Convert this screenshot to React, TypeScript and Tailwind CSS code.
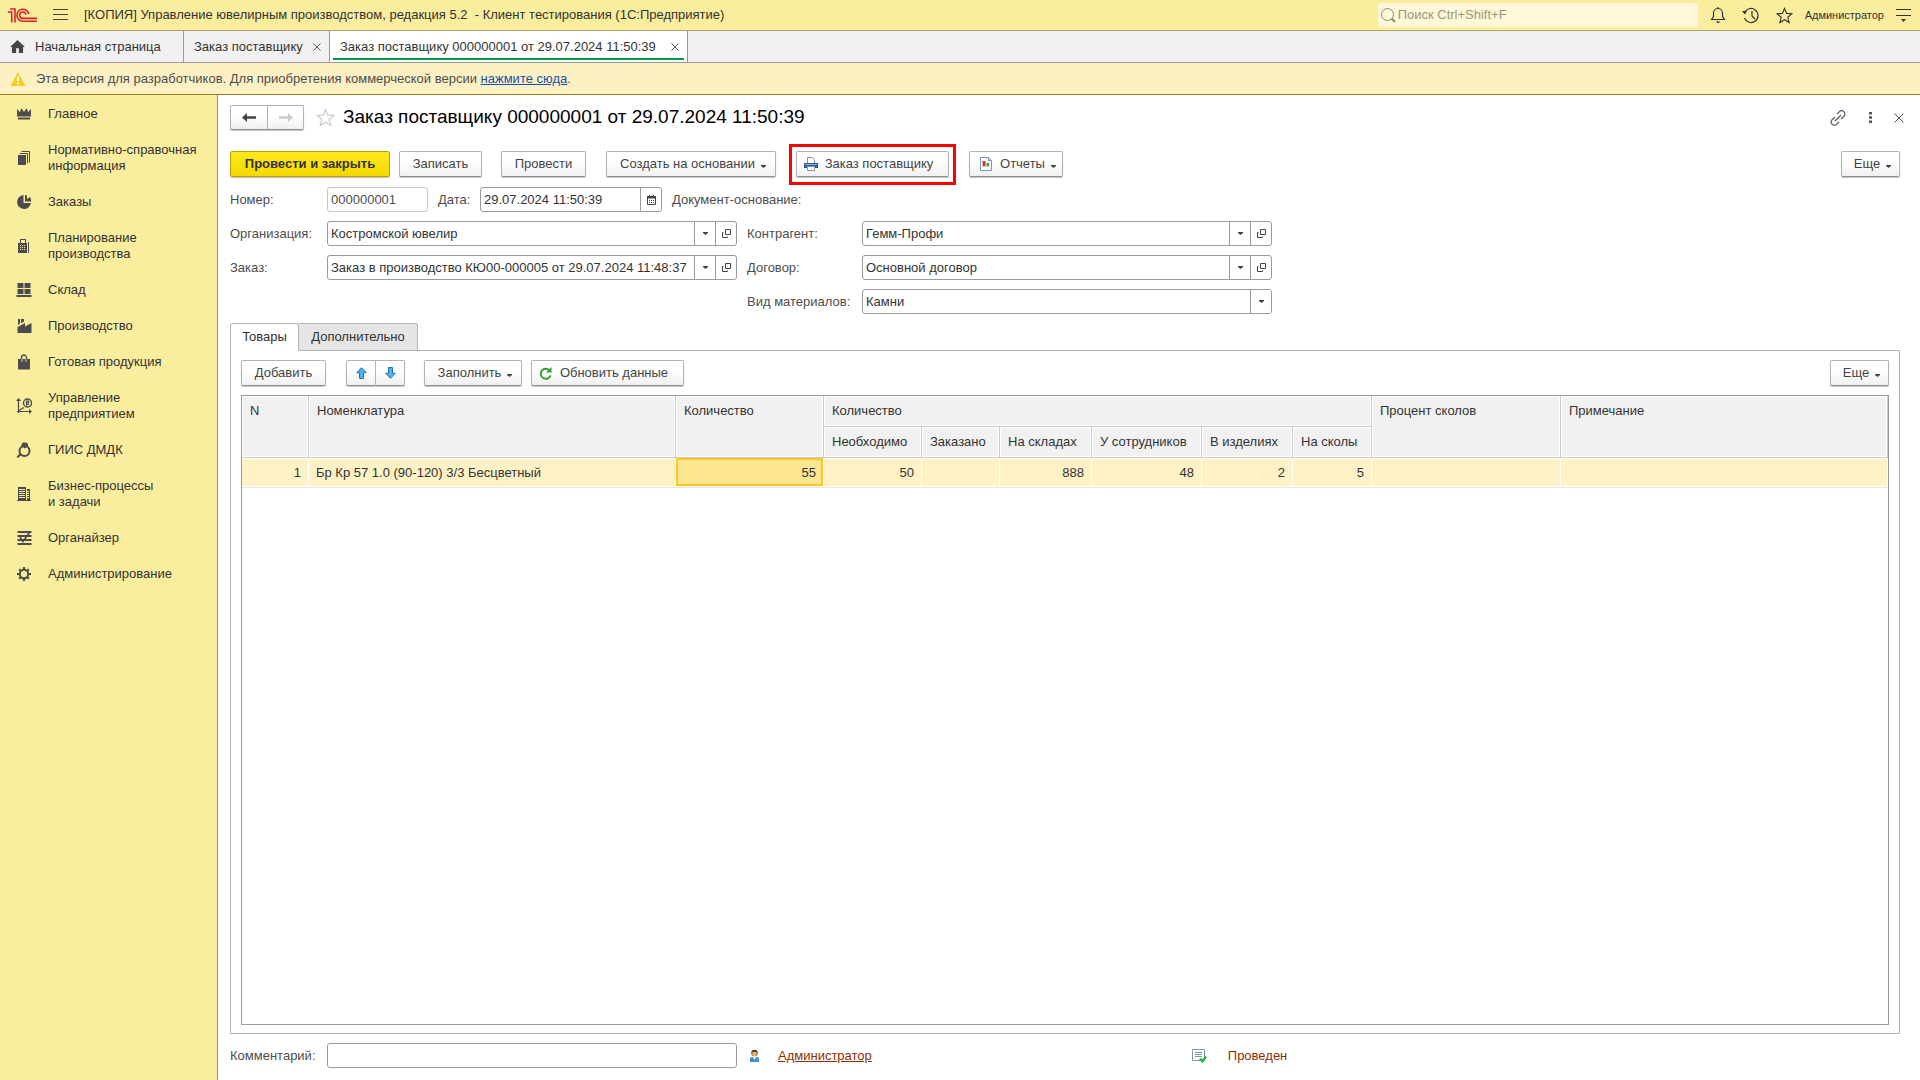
import { useState } from 'react'
import type { ReactNode } from 'react'

const ICONS: Record<string, ReactNode> = {
  crown: <path d="M1 3l3 3 1.500-4 2.500 4 2.500-4L12 6l3-3v7.500H1zM2 11.500h12v2H2z" />,
  stack: (
    <>
      <path d="M2 5h8v10H2z" />
      <path d="M3.500 3.500h8v10M5.500 1.500h8v11" fill="none" stroke="currentColor" />
    </>
  ),
  pie: <path d="M7.500 1v8H15a7 7 0 1 1-7.500-8zM9 1a7 7 0 0 1 2 .4V5l3-2a7 7 0 0 1 1.200 4.500H9z" />,
  calc: (
    <>
      <path d="M4 1h6v4h1v10H2V5h2zM5 2v3h4V2zM12 4h1v11h-1z" fillRule="evenodd" />
      <path d="M4 7.500h1M6 7.500h1M8 7.500h1M4 9.500h1M6 9.500h1M8 9.500h1M4 11.500h1M6 11.500h1M8 11.500h1" stroke="#fbed9e" />
    </>
  ),
  windows: <path d="M1.500 1h6v5h-6zM8.500 1h6v5h-6zM1.500 7h6v5h-6zM8.500 7h6v5h-6zM.5 13h15v2H.5z" />,
  factory: <path d="M2 1h2v4.500L2 7zM5 1h3v2.500L5 5.200zM1.500 9L9 5v3.500L15.500 5v10h-14z" />,
  bag: (
    <>
      <path d="M2 5h12v10.500H2z" />
      <path d="M5.500 8V4a2.500 3 0 0 1 5 0v4" fill="none" stroke="#4b4b4b" strokeWidth="1.400" />
      <path d="M6 5v3M10 5v3" stroke="#fbed9e" strokeWidth=".8" />
    </>
  ),
  chart: (
    <>
      <path d="M2.500 2v13M1 13.500h13M3 12.500l5-3" fill="none" stroke="currentColor" strokeWidth="1.200" />
      <path d="M2.500 0L5 3H0zM16 13.500L13 11v5z" />
      <circle cx="11.500" cy="5" r="4" fill="none" stroke="currentColor" strokeWidth="1.400" />
      <path d="M10.500 2.500v5M10.500 3h2v1.800h-2M10 6.500h3" fill="none" stroke="currentColor" strokeWidth="1.200" />
    </>
  ),
  ring: (
    <>
      <circle cx="8.500" cy="9" r="5" fill="none" stroke="currentColor" strokeWidth="2" />
      <path d="M5.500 2l1.500-1.500h3.500L12 2v2L8.800 6.500 5.500 4zM4.500 11L6 12.500 2 16l-1.500-1.500z" />
    </>
  ),
  building: (
    <>
      <path d="M2 1h8v13H2zM11 3h3v11h-3zM1 14h14v1H1z" />
      <path d="M3 3.500h6M3 5.500h6M3 7.500h6M3 9.500h6M3 11.500h6M11 5.500h2M11 7.500h2M11 9.500h2M11 11.500h2" stroke="#fbed9e" />
    </>
  ),
  organizer: (
    <>
      <path d="M1.500 2h14M1.500 6h14M1.500 10h14M1.500 14h14" stroke="currentColor" strokeWidth="1.800" />
      <path d="M4 7l3 4.500L13.500 2.500" fill="none" stroke="currentColor" strokeWidth="1.600" />
    </>
  ),
  gear: (
    <>
      <circle cx="8" cy="8" r="4.200" fill="none" stroke="currentColor" strokeWidth="2" />
      <path d="M8 1v2.500M8 12.500V15M1 8h2.500M12.500 8H15M3.200 3.200l1.500 1.500M11.300 11.300l1.500 1.500M3.200 12.800l1.500-1.500M11.300 4.700l1.500-1.500" stroke="currentColor" strokeWidth="2.200" />
    </>
  ),
}

const SECTIONS: { icon: string; lines: string[] }[] = [
  { icon: 'crown', lines: ['Главное'] },
  { icon: 'stack', lines: ['Нормативно-справочная', 'информация'] },
  { icon: 'pie', lines: ['Заказы'] },
  { icon: 'calc', lines: ['Планирование', 'производства'] },
  { icon: 'windows', lines: ['Склад'] },
  { icon: 'factory', lines: ['Производство'] },
  { icon: 'bag', lines: ['Готовая продукция'] },
  { icon: 'chart', lines: ['Управление', 'предприятием'] },
  { icon: 'ring', lines: ['ГИИС ДМДК'] },
  { icon: 'building', lines: ['Бизнес-процессы', 'и задачи'] },
  { icon: 'organizer', lines: ['Органайзер'] },
  { icon: 'gear', lines: ['Администрирование'] },
]

const BTN =
  'flex h-[26px] shrink-0 items-center justify-center rounded-[2px] border border-[#b3b3b3] border-b-[#8f8f8f] bg-linear-to-b from-white from-40% to-[#f0f0f0] whitespace-nowrap text-[#444] shadow-[0_1px_1px_#c4c4c4]'

function Caret() {
  return (
    <svg className="h-[3px] w-[5px] shrink-0" viewBox="0 0 5 3" fill="#444" aria-hidden="true">
      <path d="M0 0h5v1L2.500 3 0 1z" />
    </svg>
  )
}

function MenuButton({ label, width, icon }: { label: string; width: string; icon?: ReactNode }) {
  return (
    <button className={`${BTN} ${width} pl-1`}>
      {icon}
      {label}
      <span className="ml-1.5 flex pt-1"><Caret /></span>
    </button>
  )
}

function Star({ className, stroke }: { className: string; stroke: string }) {
  return (
    <svg className={className} viewBox="0 0 18 18" fill="none" stroke={stroke} strokeWidth="1.200" aria-hidden="true">
      <path d="M9 1.500l2.200 5.300 5.600.4-4.300 3.700 1.400 5.600L9 13.500l-4.900 3 1.400-5.600L1.200 7.200l5.600-.4z" />
    </svg>
  )
}

function Cross({ className }: { className: string }) {
  return (
    <svg className={className} viewBox="0 0 10 10" stroke="currentColor" aria-hidden="true">
      <path d="M.5.5l9 9M9.500.5l-9 9" />
    </svg>
  )
}

function ComboField({ id, value, openable = true }: { id: string; value: string; openable?: boolean }) {
  return (
    <div className="flex h-[25px] w-[410px] overflow-hidden rounded-[3px] border border-[#9a9a9a] bg-white">
      <div className="relative min-w-0 flex-1">
        <select id={id} className="h-full w-full appearance-none overflow-hidden pr-[21px] pl-[3px] text-[#333] outline-none">
          <option>{value}</option>
        </select>
        <span className="pointer-events-none absolute inset-y-0 right-0 flex w-[21px] items-center justify-center border-l border-[#9a9a9a] bg-white">
          <Caret />
        </span>
      </div>
      {openable && (
        <button aria-label="Открыть" className="flex w-[21px] items-center justify-center border-l border-[#9a9a9a]">
          <svg className="h-[11px] w-[11px]" viewBox="0 0 11 11" fill="none" stroke="#444" aria-hidden="true">
            <path d="M4.500 1.500h5v5h-5zM2.500 4.500h-1v5h5v-1" />
          </svg>
        </button>
      )}
    </div>
  )
}

function TitleBar() {
  return (
    <header className="flex h-[31px] shrink-0 items-center border-b border-[#aaa468] bg-[#fbed9e] text-[#333]">
      <svg className="ml-2 h-[15px] w-[29px]" viewBox="0 0 29 15" fill="none" stroke="#d8232a" strokeWidth="1.600" aria-label="1С">
        <path d="M2 1h5v13.500M0 4h3.700v10.500" />
        <path d="M20.800 6A6 6 0 1 0 15 13.200h14M18 6.500A3.200 3.200 0 1 0 15 10.400h14" />
      </svg>
      <button aria-label="Меню" className="ml-4">
        <svg className="h-[12px] w-[15px]" viewBox="0 0 15 12" stroke="#444" aria-hidden="true">
          <path d="M0 .5h15M0 5.500h15M0 10.500h15" />
        </svg>
      </button>
      <span className="ml-4 whitespace-pre">[КОПИЯ] Управление ювелирным производством, редакция 5.2  - Клиент тестирования (1С:Предприятие)</span>
      <label className="ml-auto flex h-6 w-[320px] items-center gap-0.5 rounded-[2px] bg-[#fef8d9] pl-[3px]">
        <svg className="h-[15px] w-[15px]" viewBox="0 0 15 15" fill="none" stroke="#8f8a6e" aria-hidden="true">
          <circle cx="6.500" cy="6.500" r="6" />
          <path d="M10.500 10.500l3.500 3.500" strokeWidth="2" />
        </svg>
        <input aria-label="Поиск" placeholder="Поиск Ctrl+Shift+F" className="min-w-0 flex-1 bg-transparent outline-none placeholder:text-[#9b967c]" />
      </label>
      <div className="ml-3 flex items-center gap-4">
        <button aria-label="Уведомления">
          <svg className="h-[18px] w-[16px]" viewBox="0 0 16 18" fill="none" stroke="#333" strokeWidth="1.200" aria-hidden="true">
            <path d="M8 1v1.500M1.500 13.500l2-3V7a4.500 4.500 0 0 1 9 0v3.500l2 3z" />
            <path d="M5.500 15.500h5l-2 1.500h-1z" fill="#333" stroke="none" />
          </svg>
        </button>
        <button aria-label="История">
          <svg className="h-[17px] w-[18px]" viewBox="0 0 18 17" fill="none" stroke="#333" strokeWidth="1.200" aria-hidden="true">
            <path d="M2.500 6a7 7 0 1 1 0 5M10 4v5l3 3" />
            <path d="M0 4h5L2.800 7.500z" fill="#333" stroke="none" />
          </svg>
        </button>
        <button aria-label="Избранное"><Star className="h-[17px] w-[17px]" stroke="#333" /></button>
      </div>
      <span className="ml-3 text-[11px]">Администратор</span>
      <button aria-label="Сервис" className="mr-[9px] ml-3">
        <svg className="h-[14px] w-[15px]" viewBox="0 0 15 14" aria-hidden="true">
          <path d="M0 1.500h15M0 7.500h15" stroke="#333" />
          <path d="M5 11h5l-2.500 3z" fill="#333" />
        </svg>
      </button>
    </header>
  )
}

function WindowTabs() {
  return (
    <nav className="flex h-8 shrink-0 border-b border-[#999] bg-[#f1f1f1] text-[#333]">
      <button className="flex w-[184px] items-center gap-2.5 border-r border-[#999] pl-2.5">
        <svg className="h-[13px] w-[15px]" viewBox="0 0 16 14" fill="#444" aria-hidden="true">
          <path d="M8 0l8 7.500h-2V14H9.500V9h-3v5H2V7.500H0z" />
        </svg>
        Начальная страница
      </button>
      <div className="flex w-[146px] items-center justify-between border-r border-[#999] pr-2 pl-2.5">
        <button>Заказ поставщику</button>
        <button aria-label="Закрыть"><Cross className="h-2 w-2" /></button>
      </div>
      <div className="w-[358px] border-r border-[#999] bg-white px-[3px] pb-[2px]">
        <div className="flex h-full items-center justify-between border-b-2 border-[#009a4e] pt-1 pr-[5px] pl-[7px]">
          <button>Заказ поставщику 000000001 от 29.07.2024 11:50:39</button>
          <button aria-label="Закрыть"><Cross className="h-2 w-2" /></button>
        </div>
      </div>
    </nav>
  )
}

function Sidebar() {
  return (
    <nav className="w-[218px] shrink-0 border-r border-[#9c9252] bg-[#fbed9e] pt-px">
      {SECTIONS.map(s => (
        <button key={s.icon} className="flex w-full items-center gap-4 py-2.5 pl-4 text-left leading-4 text-[#333]">
          <svg className="h-4 w-4 shrink-0 text-[#4b4b4b]" viewBox="0 0 16 16" fill="currentColor" aria-hidden="true">
            {ICONS[s.icon]}
          </svg>
          <span>
            {s.lines.map(l => <span key={l} className="block whitespace-nowrap">{l}</span>)}
          </span>
        </button>
      ))}
    </nav>
  )
}

function FormHeader() {
  return (
    <div className="flex h-[25px] items-center">
      <div className="flex h-[25px] rounded-[2px] border border-[#b3b3b3] border-b-[#8f8f8f] bg-linear-to-b from-white from-40% to-[#f0f0f0] shadow-[0_1px_1px_#c4c4c4]">
        <button aria-label="Назад" className="flex w-[37px] items-center justify-center border-r border-[#b3b3b3]">
          <svg className="h-[9px] w-[14px]" viewBox="0 0 14 9" fill="#444" aria-hidden="true"><path d="M0 4.500L5 0v3.300h9v2.400H5V9z" /></svg>
        </button>
        <button aria-label="Вперед" className="flex w-[35px] items-center justify-center">
          <svg className="h-[9px] w-[14px]" viewBox="0 0 14 9" fill="#ccc" aria-hidden="true"><path d="M14 4.500L9 0v3.300H0v2.400h9V9z" /></svg>
        </button>
      </div>
      <button aria-label="В избранное" className="ml-3"><Star className="h-[19px] w-[19px]" stroke="#ccc" /></button>
      <h1 className="ml-2 pb-0.5 text-[19px] leading-5 text-black">Заказ поставщику 000000001 от 29.07.2024 11:50:39</h1>
      <div className="mr-[-4px] ml-auto flex items-center gap-4 text-[#555]">
        <button aria-label="Ссылка">
          <svg className="h-[16px] w-[16px]" viewBox="0 0 16 16" fill="none" stroke="currentColor" strokeWidth="1.200" aria-hidden="true">
            <path d="M7 4l2.200-2.200a3.100 3.100 0 0 1 4.700 0 3.100 3.100 0 0 1 0 4.500L11 9M9 12l-2.200 2.200a3.100 3.100 0 0 1-4.700 0 3.100 3.100 0 0 1 0-4.500L5 7M5 11l6-6" />
          </svg>
        </button>
        <button aria-label="Действия" className="flex w-4 justify-center">
          <svg className="h-[11px] w-[3px]" viewBox="0 0 3 11" fill="currentColor" aria-hidden="true"><path d="M0 0h3v2.500H0zM0 4.200h3v2.500H0zM0 8.500h3V11H0z" /></svg>
        </button>
        <button aria-label="Закрыть"><Cross className="h-2.5 w-2.5" /></button>
      </div>
    </div>
  )
}

function CommandBar() {
  return (
    <div className="mt-[14px] mb-px flex h-10 items-center">
      <button className="h-[26px] w-[160px] rounded-[2px] border border-[#b39f0c] bg-linear-to-b from-[#ffe81a] to-[#f5d800] font-bold text-[#333] shadow-[0_1px_1px_#c4c4c4]">
        Провести и закрыть
      </button>
      <button className={`${BTN} ml-[9px] w-[83px]`}>Записать</button>
      <button className={`${BTN} ml-[19px] w-[85px]`}>Провести</button>
      <div className="ml-5"><MenuButton label="Создать на основании" width="w-[170px]" /></div>
      <div className="ml-[13px] flex h-[41px] w-[167px] justify-center self-start border-3 border-[#f00] pt-1">
        <button className={`${BTN} w-[153px] pr-2`}>
          <svg className="mr-[7px] h-[14px] w-[14px]" viewBox="0 0 14 14" aria-hidden="true">
            <path d="M3.500 6V.5h5l2 2V6" fill="#fff" stroke="#7d93a8" />
            <path d="M0 6h14v5h-3V9H3v2H0z" fill="#2f5c86" />
            <path d="M3.500 9.500h7v4h-7z" fill="#fff" stroke="#7d93a8" />
            <path d="M1 7.500h12" stroke="#8fb3d3" />
          </svg>
          Заказ поставщику
        </button>
      </div>
      <div className="ml-[13px]">
        <MenuButton
          label="Отчеты"
          width="w-[94px]"
          icon={
            <svg className="mr-2 h-[14px] w-[12px]" viewBox="0 0 12 14" aria-hidden="true">
              <path d="M.5.5h8l3 3v10H.5z" fill="#fff" stroke="#7d93a8" />
              <path d="M8.500.5v3h3" fill="none" stroke="#7d93a8" />
              <path d="M3 4h2.500v5H3z" fill="#e8242a" />
              <path d="M6.500 6H9v3H6.500z" fill="#3f9c28" />
              <path d="M2.500 3v6.500H10" fill="none" stroke="#aaa" strokeWidth=".6" />
            </svg>
          }
        />
      </div>
      <div className="ml-auto"><MenuButton label="Еще" width="w-[59px]" /></div>
    </div>
  )
}

function DocumentFields() {
  const [date, setDate] = useState('29.07.2024 11:50:39')

  return (
    <div className="mt-[2px] grid gap-[9px] text-[#4d4d4d]">
      <div className="flex h-[25px] items-center">
        <label htmlFor="number" className="w-[97px]">Номер:</label>
        <input id="number" readOnly value="000000001" className="h-[25px] w-[101px] rounded-[3px] border border-[#c8c8c8] px-[3px] text-[#4d4d4d]" />
        <label htmlFor="date" className="ml-2.5 w-[42px]">Дата:</label>
        <div className="flex h-[25px] w-[182px] rounded-[3px] border border-[#9a9a9a]">
          <input id="date" value={date} onChange={e => setDate(e.target.value)} className="min-w-0 flex-1 px-[3px] text-[#333] outline-none" />
          <button aria-label="Выбрать дату" className="flex w-[21px] items-center justify-center border-l border-[#9a9a9a]">
            <svg className="h-[10px] w-[9px]" viewBox="0 0 9 10" aria-hidden="true">
              <path d="M.5 1.500h8v8h-8z" fill="#fff" stroke="#444" />
              <path d="M0 1h9v2.500H0zM2 0h1v1H2zM6 0h1v1H6z" fill="#444" />
              <path d="M2 5.500h1M4 5.500h1M6 5.500h1M2 7.500h1M4 7.500h1M6 7.500h1" stroke="#444" />
            </svg>
          </button>
        </div>
        <span className="ml-2.5">Документ-основание:</span>
      </div>
      <div className="grid grid-cols-[97px_420px_115px_1fr] items-center gap-y-[9px]">
        <label htmlFor="org">Организация:</label>
        <ComboField id="org" value="Костромской ювелир" />
        <label htmlFor="partner">Контрагент:</label>
        <ComboField id="partner" value="Гемм-Профи" />
        <label htmlFor="order">Заказ:</label>
        <ComboField id="order" value="Заказ в производство КЮ00-000005 от 29.07.2024 11:48:37" />
        <label htmlFor="contract">Договор:</label>
        <ComboField id="contract" value="Основной договор" />
        <label htmlFor="material" className="col-start-3">Вид материалов:</label>
        <ComboField id="material" value="Камни" openable={false} />
      </div>
    </div>
  )
}

const HEAD = 'border-r border-b border-[#c9c9c9] bg-[#f1f1f1] px-2 text-left font-normal whitespace-nowrap shadow-[inset_0_0_0_1px_#fff]'
const CELL = 'border-r border-white bg-[#fef1c6] px-[7px] pt-0.5 whitespace-nowrap shadow-[inset_0_1px_0_#fff]'
const ACTIVE_CELL = 'border-r border-white bg-[#fee58f] px-[7px] pt-0.5 shadow-[inset_0_0_0_2px_#fbc926]'

function GoodsTable() {
  return (
    <div className="min-h-0 flex-1 border border-[#9a9a9a] bg-white">
      <table className="w-full table-fixed border-separate border-spacing-0 text-[#333]">
        <colgroup>
          <col className="w-[67px]" />
          <col className="w-[367px]" />
          <col className="w-[148px]" />
          <col className="w-[98px]" />
          <col className="w-[78px]" />
          <col className="w-[92px]" />
          <col className="w-[110px]" />
          <col className="w-[91px]" />
          <col className="w-[79px]" />
          <col className="w-[189px]" />
          <col />
        </colgroup>
        <thead>
          <tr className="h-[31px]">
            <th rowSpan={2} className={`${HEAD} pt-[7px] align-top`}>N</th>
            <th rowSpan={2} className={`${HEAD} pt-[7px] align-top`}>Номенклатура</th>
            <th rowSpan={2} className={`${HEAD} pt-[7px] align-top`}>Количество</th>
            <th colSpan={6} className={HEAD}>Количество</th>
            <th rowSpan={2} className={`${HEAD} pt-[7px] align-top`}>Процент сколов</th>
            <th rowSpan={2} className={`${HEAD} pt-[7px] align-top`}>Примечание</th>
          </tr>
          <tr className="h-[31px]">
            <th className={HEAD}>Необходимо</th>
            <th className={HEAD}>Заказано</th>
            <th className={HEAD}>На складах</th>
            <th className={HEAD}>У сотрудников</th>
            <th className={HEAD}>В изделиях</th>
            <th className={HEAD}>На сколы</th>
          </tr>
        </thead>
        <tbody>
          <tr className="h-[28px] text-right">
            <td className={CELL}>1</td>
            <td className={`${CELL} text-left`}>Бр Кр 57 1.0 (90-120) 3/3 Бесцветный</td>
            <td className={ACTIVE_CELL}>55</td>
            <td className={CELL}>50</td>
            <td className={CELL} />
            <td className={CELL}>888</td>
            <td className={CELL}>48</td>
            <td className={CELL}>2</td>
            <td className={CELL}>5</td>
            <td className={CELL} />
            <td className={CELL} />
          </tr>
          <tr>
            <td colSpan={11} className="h-[2px] border-b border-[#e5e5e5]" />
          </tr>
        </tbody>
      </table>
    </div>
  )
}

function Goods() {
  return (
    <section className="mt-[9px] flex flex-1 flex-col">
      <div role="tablist" className="relative z-10 mb-[-1px] flex h-7 text-[#333]">
        <button role="tab" aria-selected="true" className="w-[69px] rounded-t-[3px] border border-b-0 border-[#b3b3b3] bg-white pb-0.5">Товары</button>
        <button role="tab" aria-selected="false" className="w-[119px] rounded-tr-[3px] border border-l-0 border-[#b3b3b3] bg-[#e5e5e5]">Дополнительно</button>
      </div>
      <div className="flex flex-1 flex-col gap-[9px] border border-[#b3b3b3] px-2.5 pt-[9px] pb-[8px]">
        <div className="flex h-[26px]">
          <button className={`${BTN} w-[85px]`}>Добавить</button>
          <button aria-label="Вверх" className={`${BTN} ml-5 w-[30px] rounded-r-none`}>
            <svg className="h-[12px] w-[11px]" viewBox="0 0 11 12" fill="#4db3ee" stroke="#2874a8" aria-hidden="true"><path d="M5.500.7l4.800 5H7.500v5.800h-4V5.700H.7z" /></svg>
          </button>
          <button aria-label="Вниз" className={`${BTN} w-[29px] rounded-l-none border-l-0`}>
            <svg className="h-[12px] w-[11px]" viewBox="0 0 11 12" fill="#4db3ee" stroke="#2874a8" aria-hidden="true"><path d="M5.500 11.300l4.800-5H7.500V.5h-4v5.800H.7z" /></svg>
          </button>
          <div className="ml-[19px]"><MenuButton label="Заполнить" width="w-[98px]" /></div>
          <button className={`${BTN} ml-[9px] w-[153px] pr-2`}>
            <svg className="mr-2 h-[13px] w-[13px]" viewBox="0 0 13 13" aria-hidden="true">
              <path d="M10.500 3.500A5 5 0 1 0 11.500 8.500" fill="none" stroke="#2fa036" strokeWidth="2" />
              <path d="M12.500 0v5.500H7z" fill="#2fa036" />
            </svg>
            Обновить данные
          </button>
          <div className="ml-auto"><MenuButton label="Еще" width="w-[59px]" /></div>
        </div>
        <GoodsTable />
      </div>
    </section>
  )
}

function FormFooter() {
  return (
    <div className="mt-[9px] mb-3 flex h-[25px] items-center">
      <label htmlFor="comment" className="w-[97px] text-[#4d4d4d]">Комментарий:</label>
      <input id="comment" className="h-[25px] w-[410px] rounded-[3px] border border-[#9a9a9a] px-1" />
      <svg className="ml-3 h-[14px] w-[11px]" viewBox="0 0 11 14" aria-hidden="true">
        <path d="M1 13V9.500Q1 8 3 8h5q2 0 2 1.500V13z" fill="#3b93c9" />
        <path d="M4 8h3l-1.500 3z" fill="#fff" />
        <circle cx="5.500" cy="4" r="3.200" fill="#4a3a28" />
        <path d="M3.200 3.500q2.300-1.500 4.600 0v1.500q0 2.500-2.300 2.500T3.200 5z" fill="#eab765" />
      </svg>
      <a href="#" className="ml-[18px] text-[#8c3000] underline">Администратор</a>
      <svg className="ml-80 h-[14px] w-[15px]" viewBox="0 0 15 14" aria-hidden="true">
        <path d="M.5.5h12v11H.5z" fill="#fff" stroke="#8495a6" />
        <path d="M3 3.500h7M3 5.500h7M3 7.500h7" stroke="#8495a6" />
        <path d="M8 9.500l2.500 3L14 7.500" fill="none" stroke="#27b33c" strokeWidth="2.200" />
      </svg>
      <span className="ml-[21px] text-[#8c3000]">Проведен</span>
    </div>
  )
}

export default function App() {
  return (
    <div className="flex min-h-screen flex-col bg-white font-['Liberation_Sans',Arial,sans-serif] text-[13px] leading-4">
      <TitleBar />
      <WindowTabs />
      <div className="flex h-8 shrink-0 items-center gap-2.5 border-b border-[#99801a] bg-[#fdf1c4] pl-2.5 text-[#4d4d4d]">
        <svg className="h-[14px] w-4" viewBox="0 0 16 14" aria-hidden="true">
          <path d="M8 0l7.500 14H.5z" fill="#fcc91f" />
          <path d="M7 4.500h2V9H7zM7 10.500h2v2H7z" fill="#fff" />
        </svg>
        <p>Эта версия для разработчиков. Для приобретения коммерческой версии <a href="#" className="text-[#1a4fae] underline">нажмите сюда</a>.</p>
      </div>
      <div className="flex flex-1">
        <Sidebar />
        <main className="flex min-w-0 flex-1 flex-col pt-2.5 pr-5 pl-3">
          <FormHeader />
          <CommandBar />
          <DocumentFields />
          <Goods />
          <FormFooter />
        </main>
      </div>
    </div>
  )
}
